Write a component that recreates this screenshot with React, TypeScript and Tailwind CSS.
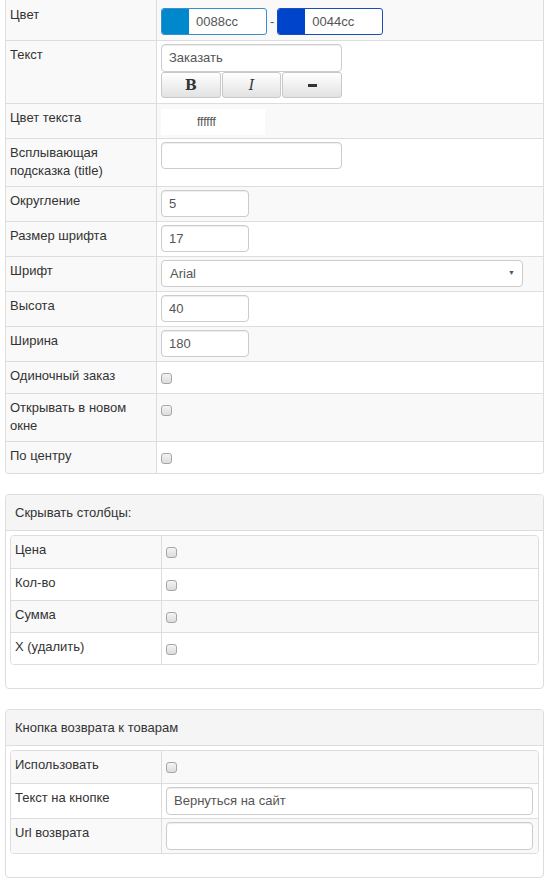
import React from 'react';

const font = { fontFamily: '"Liberation Sans", Arial, sans-serif' };

const Check = () => (
  <span className="mt-[8px] inline-block h-[11px] w-[11px] rounded-[3px] border border-[#a6a6a6] bg-gradient-to-b from-[#f4f4f4] to-[#dcdcdc]" />
);

const Input = ({ value = '', w = 'w-[181px]', h = 'h-[27px]' }: { value?: string; w?: string; h?: string }) => (
  <div
    className={`${w} ${h} flex items-center rounded-[4px] border border-[#cccccc] bg-white px-[7px] text-[13px] text-[#555] shadow-[inset_0_1px_1px_rgba(0,0,0,0.075)]`}
  >
    {value}
  </div>
);

const ColorBox = ({ color, border }: { color: string; border: string }) => (
  <div className={`flex h-[27px] w-[106px] overflow-hidden rounded-[3px] border ${border} bg-white`}>
    <div className="w-[27px]" style={{ background: color }} />
    <div className="flex items-center pl-[7px] text-[13px] text-[#555]">{color.slice(1)}</div>
  </div>
);

type Row = { label: React.ReactNode; h: string; value: React.ReactNode; striped: boolean; first?: boolean };

const TopRow = ({ label, h, value, striped, first }: Row) => (
  <div className={`flex ${h} ${first ? '' : 'border-t border-[#dddddd]'}`}>
    <div className={`w-[150px] shrink-0 bg-[#f9f9f9] pl-[4px] ${first ? 'pt-[6px]' : 'pt-[5px]'} text-[13px] leading-[18px] text-[#333]`}>
      {label}
    </div>
    <div className={`flex-1 border-l border-[#dddddd] pl-[4px] ${first ? 'pt-[8px]' : 'pt-[3px]'} ${striped ? 'bg-[#f9f9f9]' : 'bg-white'}`}>
      {value}
    </div>
  </div>
);

const FmtButton = ({ children }: { children: React.ReactNode }) => (
  <div className="flex h-[26px] w-[60px] items-center justify-center rounded-[3px] border border-[#c8c8c8] bg-gradient-to-b from-white to-[#e2e2e2] text-[#333]">
    {children}
  </div>
);

const InnerRow = ({ label, h, value, striped, first }: Row) => (
  <div className={`flex ${h} ${first ? '' : 'border-t border-[#dddddd]'} ${striped ? 'bg-[#f9f9f9]' : 'bg-white'}`}>
    <div className="w-[150px] shrink-0 pl-[4px] pt-[5px] text-[13px] leading-[18px] text-[#333]">{label}</div>
    <div className="flex-1 border-l border-[#dddddd] pl-[4px] pr-[5px] pt-[3px]">{value}</div>
  </div>
);

const Panel = ({ title, children }: { title: string; children: React.ReactNode }) => (
  <div className="mt-[20px] rounded-[4px] border border-[#dddddd] bg-white">
    <div className="flex h-[36px] items-center rounded-t-[4px] border-b border-[#dddddd] bg-[#f5f5f5] pl-[9px] text-[13px] text-[#333]">
      {title}
    </div>
    <div className="p-[4px] pb-[23px]">
      <div className="overflow-hidden rounded-[4px] border border-[#dddddd]">{children}</div>
    </div>
  </div>
);

export default function App() {
  const top: Row[] = [
    {
      label: 'Цвет',
      h: 'h-[40px]',
      striped: true,
      first: true,
      value: (
        <div className="flex items-center">
          <ColorBox color="#0088cc" border="border-[#3a8fc8]" />
          <span className="px-[3px] text-[13px] text-[#555]">-</span>
          <ColorBox color="#0044cc" border="border-[#1a4fb8]" />
        </div>
      ),
    },
    {
      label: 'Текст',
      h: 'h-[63px]',
      striped: false,
      value: (
        <div className="w-[181px]">
          <Input value="Заказать" h="h-[28px]" />
          <div className="flex gap-[1px]">
            <FmtButton>
              <span className="text-[14px] font-bold" style={{ fontFamily: '"DejaVu Serif", serif' }}>B</span>
            </FmtButton>
            <FmtButton>
              <span className="text-[14px] italic" style={{ fontFamily: '"DejaVu Serif", serif' }}>I</span>
            </FmtButton>
            <FmtButton>
              <span className="mt-[1px] block h-[3px] w-[9px] bg-[#333]" />
            </FmtButton>
          </div>
        </div>
      ),
    },
    {
      label: 'Цвет текста',
      h: 'h-[35px]',
      striped: true,
      value: (
        <div className="mt-[2px] flex h-[26px] w-[104px] bg-white">
          <div className="w-[27px] bg-white" />
          <div className="flex items-center pl-[9px] text-[12px] text-[#555]">ffffff</div>
        </div>
      ),
    },
    {
      label: (
        <>
          Всплывающая
          <br />
          подсказка (title)
        </>
      ),
      h: 'h-[48px]',
      striped: false,
      value: <Input />,
    },
    { label: 'Округление', h: 'h-[35px]', striped: true, value: <Input value="5" w="w-[88px]" /> },
    { label: 'Размер шрифта', h: 'h-[35px]', striped: false, value: <Input value="17" w="w-[88px]" /> },
    {
      label: 'Шрифт',
      h: 'h-[35px]',
      striped: true,
      value: (
        <div className="flex h-[27px] w-[362px] items-center justify-between rounded-[4px] border border-[#cccccc] bg-white pl-[8px] pr-[7px] text-[13px] text-[#555]">
          <span>Arial</span>
          <span className="text-[7px] text-[#555]">▼</span>
        </div>
      ),
    },
    { label: 'Высота', h: 'h-[35px]', striped: false, value: <Input value="40" w="w-[88px]" /> },
    { label: 'Ширина', h: 'h-[35px]', striped: true, value: <Input value="180" w="w-[88px]" /> },
    { label: 'Одиночный заказ', h: 'h-[32px]', striped: false, value: <Check /> },
    {
      label: (
        <>
          Открывать в новом
          <br />
          окне
        </>
      ),
      h: 'h-[48px]',
      striped: true,
      value: <Check />,
    },
    { label: 'По центру', h: 'h-[32px]', striped: false, value: <Check /> },
  ];

  const hide = ['Цена', 'Кол-во', 'Сумма', 'X (удалить)'];

  return (
    <div className="min-h-[887px] w-[551px] bg-white pl-[5px] pr-[7px]" style={font}>
      <div className="overflow-hidden rounded-b-[4px] border-x border-b border-[#dddddd]">
        {top.map((r, i) => (
          <TopRow key={i} {...r} />
        ))}
      </div>

      <Panel title="Скрывать столбцы:">
        {hide.map((l, i) => (
          <InnerRow key={l} label={l} h="h-[32px]" striped={i % 2 === 0} first={i === 0} value={<Check />} />
        ))}
      </Panel>

      <Panel title="Кнопка возврата к товарам">
        <InnerRow label="Использовать" h="h-[32px]" striped first value={<Check />} />
        <InnerRow label="Текст на кнопке" h="h-[35px]" striped={false} value={<Input value="Вернуться на сайт" w="w-full" h="h-[28px]" />} />
        <InnerRow label="Url возврата" h="h-[35px]" striped value={<Input w="w-full" h="h-[28px]" />} />
      </Panel>
    </div>
  );
}
